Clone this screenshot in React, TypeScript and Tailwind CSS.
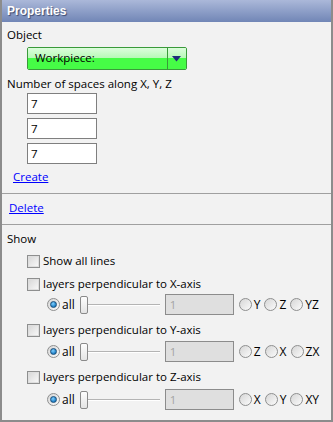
import React from "react";

const font = "font-['Open_Sans',sans-serif]";

function Checkbox({ label }: { label: string }) {
  return (
    <div className="ml-[20px] flex h-[16px] items-center gap-[3px]">
      <div className="flex h-[13px] w-[13px] items-center justify-center border border-[#8e8f8f] bg-white">
        <div className="h-[11px] w-[11px] border border-[#dedede] bg-gradient-to-br from-[#d9d9d9] to-[#f7f7f7]" />
      </div>
      <span className="text-[11.5px] leading-[16px] text-black">{label}</span>
    </div>
  );
}

function Radio({ checked }: { checked?: boolean }) {
  return (
    <div className="flex h-[13px] w-[13px] shrink-0 items-center justify-center rounded-full border border-[#8e8f8f] bg-gradient-to-br from-[#d6d6d6] to-[#fbfbfb]">
      {checked && (
        <div className="h-[7px] w-[7px] rounded-full border border-[#1b4f7a] bg-[radial-gradient(circle_at_40%_35%,#7fd0ff,#1b7cc4_70%)]" />
      )}
    </div>
  );
}

function Option({ label }: { label: string }) {
  return (
    <div className="flex items-center gap-[2px]">
      <Radio />
      <span className="text-[12px] leading-[16px] text-black">{label}</span>
    </div>
  );
}

function LayerRow({ opts }: { opts: string[] }) {
  return (
    <div className="ml-[40px] flex h-[21px] items-center">
      <div className="flex items-center gap-[2px]">
        <Radio checked />
        <span className="text-[12px] leading-[16px] text-black">all</span>
      </div>
      <div className="relative ml-[5px] h-[21px] w-[80px]">
        <div className="absolute left-0 right-0 top-[10px] h-[1px] bg-[#b4b4b4]" />
        <div className="absolute left-0 right-0 top-[11px] h-[1px] bg-white" />
        <div className="absolute left-0 top-[2px] h-[18px] w-[8px] rounded-[2px] border border-[#8a8a8a] bg-gradient-to-b from-[#fdfdfd] to-[#e4e4e4]" />
      </div>
      <div className="ml-[5px] flex h-[21px] w-[69px] items-center border border-[#8c8c8c] bg-[#dfdfdf] pl-[4px] text-[11.5px] text-[#a4a4a4]">
        1
      </div>
      <div className="ml-[5px] flex items-center gap-[4px]">
        {opts.map((o) => (
          <Option key={o} label={o} />
        ))}
      </div>
    </div>
  );
}

function NumBox() {
  return (
    <div className="flex h-[21px] w-[70px] items-center border border-[#7f7f7f] bg-white pl-[3px] text-[11.5px] text-black">
      7
    </div>
  );
}

export default function App() {
  return (
    <div className={`${font} h-[422px] w-[333px] overflow-hidden border-2 border-t-0 border-[#8c8c8c] bg-[#f2f2f2]`}>
      {/* Title */}
      <div className="flex h-[22px] items-center bg-gradient-to-b from-[#abb8d9] to-[#7186b6] pl-[5px]">
        <span className="font-['Liberation_Sans',sans-serif] text-[12px] font-bold text-white [text-shadow:1px_1px_1px_#3c4a70]">
          Properties
        </span>
      </div>

      <div className="pl-[5px]">
        <div className="mt-[5px] h-[16px] text-[11.5px] leading-[16px] text-black">Object</div>

        <div className="ml-[20px] mt-[4px] flex h-[23px] w-[160px] overflow-hidden rounded-[2px] border border-[#3a9a3a]">
          <div className="flex flex-1 flex-col">
            <div className="h-[10px] bg-gradient-to-b from-[#dcfddc] to-[#b6f9b6]" />
            <div className="flex-1 bg-[#46fc46]" />
          </div>
          <div className="w-[1px] bg-[#3a9a3a]" />
          <div className="relative flex w-[18px] flex-col">
            <div className="h-[10px] bg-gradient-to-b from-[#dcfddc] to-[#b6f9b6]" />
            <div className="flex-1 bg-[#46fc46]" />
            <svg className="absolute left-[4px] top-[8px]" width="9" height="6" viewBox="0 0 9 6">
              <path d="M0 0h9L4.5 5.5z" fill="#1f2d7a" />
            </svg>
          </div>
        </div>
        <div className="relative -mt-[23px] ml-[28px] h-[23px] text-[11.5px] leading-[21px] text-black">Workpiece:</div>

        <div className="mt-[6px] h-[16px] text-[11.5px] leading-[16px] text-black">
          Number of spaces along X, Y, Z
        </div>

        <div className="ml-[20px] mt-[1px] flex flex-col gap-[4px]">
          <NumBox />
          <NumBox />
          <NumBox />
        </div>

        <div className="ml-[6px] mt-[5px] h-[16px] text-[11.5px] leading-[16px] text-[#0000ff] underline">Create</div>
      </div>

      <div className="mt-[8px] h-[1px] bg-[#a0a0a0]" />

      <div className="ml-[7px] mt-[6px] h-[16px] text-[11.5px] leading-[16px] text-[#0000ff] underline">Delete</div>

      <div className="mt-[8px] h-[1px] bg-[#a0a0a0]" />

      <div className="pl-[5px]">
        <div className="mt-[6px] h-[16px] text-[11.5px] leading-[16px] text-black">Show</div>
        <div className="mt-[6px]">
          <Checkbox label="Show all lines" />
        </div>
        <div className="mt-[7px]">
          <Checkbox label="layers perpendicular to X-axis" />
        </div>
        <div className="mt-[2px]">
          <LayerRow opts={["Y", "Z", "YZ"]} />
        </div>
        <div className="mt-[7px]">
          <Checkbox label="layers perpendicular to Y-axis" />
        </div>
        <div className="mt-[3px]">
          <LayerRow opts={["Z", "X", "ZX"]} />
        </div>
        <div className="mt-[7px]">
          <Checkbox label="layers perpendicular to Z-axis" />
        </div>
        <div className="mt-[4px]">
          <LayerRow opts={["X", "Y", "XY"]} />
        </div>
      </div>
    </div>
  );
}
